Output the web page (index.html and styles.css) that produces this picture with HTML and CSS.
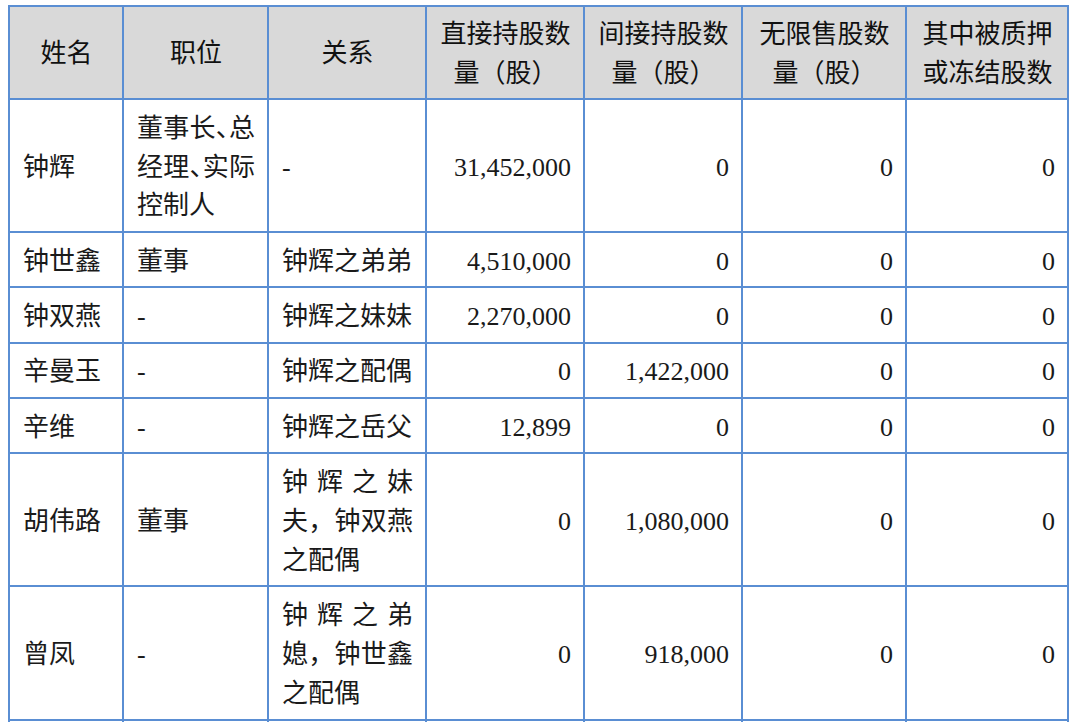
FILE: index.html
```html
<!DOCTYPE html>
<html lang="zh-CN">
<head>
<meta charset="utf-8">
<title>持股情况</title>
<link rel="stylesheet" href="styles.css">
</head>
<body>
<table class="holdings">
  <colgroup>
    <col class="c-name">
    <col class="c-pos">
    <col class="c-rel">
    <col class="c-num">
    <col class="c-num">
    <col class="c-num6">
    <col class="c-num7">
  </colgroup>
  <thead>
    <tr>
      <th>姓名</th>
      <th>职位</th>
      <th>关系</th>
      <th>直接持股数量（股）</th>
      <th>间接持股数量（股）</th>
      <th>无限售股数量（股）</th>
      <th>其中被质押或冻结股数</th>
    </tr>
  </thead>
  <tbody>
    <tr>
      <td class="txt">钟辉</td>
      <td class="txt">董事长<span class="hw">、</span>总经理<span class="hw">、</span>实际控制人</td>
      <td class="txt">-</td>
      <td class="num">31,452,000</td>
      <td class="num">0</td>
      <td class="num">0</td>
      <td class="num">0</td>
    </tr>
    <tr>
      <td class="txt">钟世鑫</td>
      <td class="txt">董事</td>
      <td class="txt">钟辉之弟弟</td>
      <td class="num">4,510,000</td>
      <td class="num">0</td>
      <td class="num">0</td>
      <td class="num">0</td>
    </tr>
    <tr>
      <td class="txt">钟双燕</td>
      <td class="txt">-</td>
      <td class="txt">钟辉之妹妹</td>
      <td class="num">2,270,000</td>
      <td class="num">0</td>
      <td class="num">0</td>
      <td class="num">0</td>
    </tr>
    <tr>
      <td class="txt">辛曼玉</td>
      <td class="txt">-</td>
      <td class="txt">钟辉之配偶</td>
      <td class="num">0</td>
      <td class="num">1,422,000</td>
      <td class="num">0</td>
      <td class="num">0</td>
    </tr>
    <tr>
      <td class="txt">辛维</td>
      <td class="txt">-</td>
      <td class="txt">钟辉之岳父</td>
      <td class="num">12,899</td>
      <td class="num">0</td>
      <td class="num">0</td>
      <td class="num">0</td>
    </tr>
    <tr>
      <td class="txt">胡伟路</td>
      <td class="txt">董事</td>
      <td class="txt">钟辉之妹夫，钟双燕之配偶</td>
      <td class="num">0</td>
      <td class="num">1,080,000</td>
      <td class="num">0</td>
      <td class="num">0</td>
    </tr>
    <tr>
      <td class="txt">曾凤</td>
      <td class="txt">-</td>
      <td class="txt">钟辉之弟媳，钟世鑫之配偶</td>
      <td class="num">0</td>
      <td class="num">918,000</td>
      <td class="num">0</td>
      <td class="num">0</td>
    </tr>
    <tr class="blank">
      <td class="txt">&nbsp;</td>
      <td class="txt">&nbsp;</td>
      <td class="txt">&nbsp;</td>
      <td class="num">&nbsp;</td>
      <td class="num">&nbsp;</td>
      <td class="num">&nbsp;</td>
      <td class="num">&nbsp;</td>
    </tr>
  </tbody>
</table>
</body>
</html>
```

FILE: styles.css
```css
html, body {
  background: #ffffff;
}

body {
  margin: 5px 0 0 8px;
  font-family: "Liberation Serif", "Noto Sans CJK SC", serif;
  font-size: 26px;
  color: #1a1a1a;
}

.holdings {
  border-collapse: collapse;
  table-layout: fixed;
  width: 1061px;
}

.c-name { width: 114px; }
.c-pos  { width: 145px; }
.c-rel  { width: 158px; }
.c-num  { width: 158px; }
.c-num6 { width: 164px; }
.c-num7 { width: 162px; }

.holdings th,
.holdings td {
  border: 2px solid #5a8ed3;
  padding: 9.6px 12px 4.8px 13px;
  line-height: 38.9px;
  vertical-align: middle;
  font-weight: 400;
}

.holdings th {
  background: #d9d9d9;
  text-align: center;
  color: #111111;
  padding-top: 8.8px;
  padding-bottom: 4.4px;
}

.holdings td.txt {
  text-align: justify;
}

.holdings td.num {
  text-align: right;
}

.hw {
  font-feature-settings: "halt" 1;
}

.blank td {
  height: 110px;
}
```
